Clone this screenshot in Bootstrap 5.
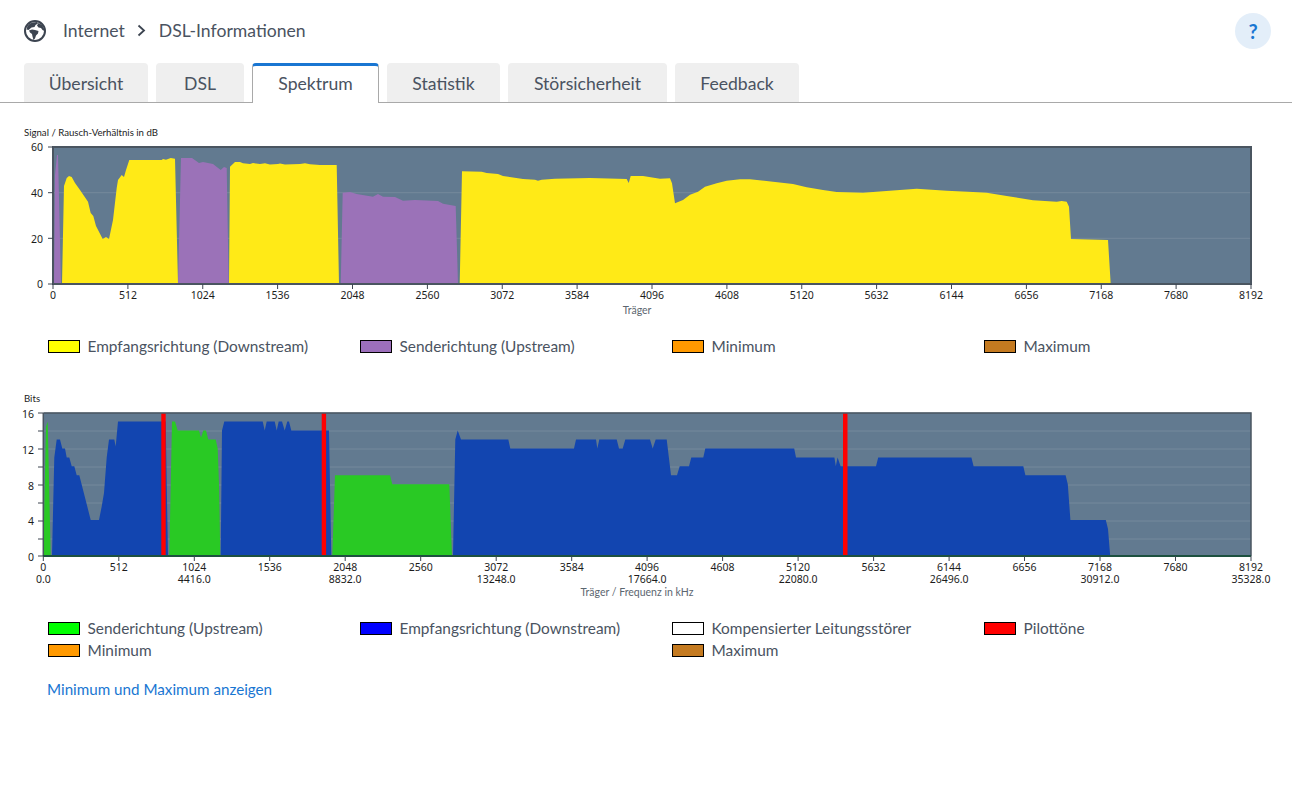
<!DOCTYPE html>
<html lang="de">
<head>
<meta charset="utf-8">
<title>DSL-Informationen</title>
<link rel="stylesheet" href="https://cdn.jsdelivr.net/npm/bootstrap@5.3.0/dist/css/bootstrap.min.css">
<style>
body{font-family:Lato,"Noto Sans",sans-serif;font-size:17.6px;color:#4a5361;background:#fff;}
.top-bar{height:63px;padding:0 21px 1px 24px;}
.crumbs{gap:12.5px;}
.crumb-globe{width:22px;height:22px;margin-right:4.5px;}
.help-btn{width:36px;height:36px;border-radius:50%;background:#e3eef9;color:#1976d2;font-weight:700;font-size:20px;border:0;padding:0;line-height:36px;}
.fb-tabs{--bs-nav-tabs-border-color:#a9a9a9;--bs-nav-tabs-border-radius:4px;gap:8px;padding-left:24px;height:40px;}
.fb-tabs .nav-link{background:#efefef;color:#4a5361;height:39px;padding:0;border:0;border-radius:4px 4px 0 0;line-height:42px;text-align:center;margin:0;}
.fb-tabs .nav-link.active{background:#fff;color:#4a5361;height:40px;border:1px solid #a9a9a9;border-top:3px solid #1976d2;border-bottom:0;line-height:36px;margin:0;}
.w-a{width:124px}.w-b{width:88px}.w-c{width:127px}.w-d{width:113px}.w-e{width:159px}.w-f{width:124px}
.plot-svg{display:block;width:1292px;}
.plot-one{height:198px;margin-top:19px;}
.plot-two{height:210px;margin-top:33px;}
.plot-svg text{font-family:"Noto Sans",sans-serif;font-size:10.5px;fill:#1c1c1c;}
.plot-svg text.ttl{font-family:Lato,sans-serif;font-size:9.65px;}
.plot-svg text.axn{font-family:Lato,sans-serif;font-size:10.5px;fill:#5c6670;}
.legend-grid{width:1248px;margin:0 0 0 48px;--bs-gutter-x:0;}
.legend-one{margin-top:15px;}
.legend-two{margin-top:17px;}
.legend-item{height:22px;line-height:22px;gap:7.5px;font-size:15.4px;}
.swatch{width:32px;height:13px;border:1px solid #000;flex:none;}
.more-link{display:block;margin:17px 0 0 47px;line-height:22px;font-size:15.2px;color:#1976d2;text-decoration:none;width:max-content;}
</style>
</head>
<body>
<header class="top-bar d-flex align-items-center justify-content-between">
  <div class="crumbs d-flex align-items-center">
    <svg class="crumb-globe" viewBox="0 0 22 22" aria-hidden="true">
      <circle cx="11" cy="11" r="10" fill="#fff" stroke="#3c4450" stroke-width="2"/>
      <path fill="#3c4450" d="M6 3.500 9 2.500 13 2l1 1.500-2.500 1.500-1 2-3 .5-3 2.500L2.500 9.500 3.500 6zM14.500 3l3.500 2 2 3.500.5 2.500-2-1-1.500-2-2.500-.5L13 5.500zM5 10.500l3-1 3 .5 3.500 1-.5 2.500-2 2-1 3-1.500 1.500-1-3.500L8 14l-2-1.500z"/>
    </svg>
    <span>Internet</span>
    <svg width="9" height="13" viewBox="0 0 9 13" aria-hidden="true"><path d="M1.500 1.500 7 6.500l-5.500 5" fill="none" stroke="#3c4450" stroke-width="1.800"/></svg>
    <span>DSL-Informationen</span>
  </div>
  <button class="help-btn" type="button">?</button>
</header>

<ul class="nav nav-tabs fb-tabs">
  <li class="nav-item"><a class="nav-link w-a" href="#">Übersicht</a></li>
  <li class="nav-item"><a class="nav-link w-b" href="#">DSL</a></li>
  <li class="nav-item"><a class="nav-link active w-c" href="#">Spektrum</a></li>
  <li class="nav-item"><a class="nav-link w-d" href="#">Statistik</a></li>
  <li class="nav-item"><a class="nav-link w-e" href="#">Störsicherheit</a></li>
  <li class="nav-item"><a class="nav-link w-f" href="#">Feedback</a></li>
</ul>

<svg class="plot-svg plot-one" viewBox="0 122 1292 198" role="img" aria-label="Signal / Rausch-Verhältnis">
  <text class="ttl" x="24" y="136">Signal / Rausch-Verhältnis in dB</text>
  <rect x="53" y="147" width="1198" height="137" fill="#627a90"/>
  <path d="M53 192.700H1251M53 238.300H1251" stroke="#75899c" stroke-width="1" fill="none"/>
  <polygon fill="#9b72b8" points="54,284 55,175 57,155 58,155 61,284"/>
  <polygon fill="#ffea17" points="62,284 64,186 66.700,178 69,176 71.700,177 75,183 80,190 88,201.700 90.700,213 93.300,216 96,226 102.700,239 106,237 109,239 113,220 116.700,188 118,180 121.700,175 124,177 126,170 129.300,160 161.700,160 163,159 166,159.700 170.700,158 175,158.700 178,284"/>
  <polygon fill="#9b72b8" points="178,284 181,158 192,158 199,163 203,162 213,164 220.700,170 224,167 226.700,168 228.700,284"/>
  <polygon fill="#ffea17" points="229,284 230,166.700 235,162 240,162 243,163.300 250,164 253,163 260,164 265,163.300 270,164.500 278,164 280,163.500 285,164.500 300,164 305,163.300 310,164.300 320,165 336.700,165 339,284"/>
  <polygon fill="#9b72b8" points="340.700,284 342.700,192.700 350,192 356.700,194 373,196.700 378,194 383,196.700 395,197 403,200.700 415,200 438,201 443,203.700 455.700,206 458,284"/>
  <polygon fill="#ffea17" points="459.700,284 462,171.300 481.700,171.700 486.700,173 498,174 503,176 523,179 535,179.700 538,180.700 541.700,179.700 555,178.700 590,178 626.700,179 628.700,183 630.700,176 643,176 660,178.700 670,178.300 672,183.300 675,203.300 683,200 690,194.700 698,191.700 705,186.700 716.700,183.300 726.700,180.700 740,179.300 750,179.300 773,181.700 793,184 806.700,187.300 823,190 836.700,192 863,192.700 883,191.300 916.700,188.700 946.700,190.700 973,192 986.700,192.700 1006.700,196 1033,200.300 1056.700,201.700 1061.700,201 1066.700,201.700 1069,206.700 1071,239 1108,240 1110.700,284"/>
  <rect x="53" y="147" width="1198" height="137" fill="none" stroke="#4a5560" stroke-width="2"/>
  <path d="M48 147H53M48 192.700H53M48 238.300H53M48 284H53M53 284v5M127.900 284v5M202.750 284v5M277.600 284v5M352.500 284v5M427.400 284v5M502.250 284v5M577.100 284v5M652 284v5M726.900 284v5M801.750 284v5M876.600 284v5M951.500 284v5M1026.400 284v5M1101.250 284v5M1176.100 284v5M1251 284v5" stroke="#3c4450" stroke-width="1" fill="none"/>
  <g text-anchor="end">
    <text x="43" y="151">60</text><text x="43" y="197">40</text><text x="43" y="243">20</text><text x="43" y="288">0</text>
  </g>
  <g text-anchor="middle">
    <text x="53" y="299">0</text><text x="127.900" y="299">512</text><text x="202.750" y="299">1024</text><text x="277.600" y="299">1536</text><text x="352.500" y="299">2048</text><text x="427.400" y="299">2560</text><text x="502.250" y="299">3072</text><text x="577.100" y="299">3584</text><text x="652" y="299">4096</text><text x="726.900" y="299">4608</text><text x="801.750" y="299">5120</text><text x="876.600" y="299">5632</text><text x="951.500" y="299">6144</text><text x="1026.400" y="299">6656</text><text x="1101.250" y="299">7168</text><text x="1176.100" y="299">7680</text><text x="1251" y="299">8192</text>
    <text class="axn" x="637" y="314">Träger</text>
  </g>
</svg>

<div class="row legend-grid legend-one">
  <div class="col-3 legend-item d-flex align-items-center"><span class="swatch" style="background:#ffff00"></span><span>Empfangsrichtung (Downstream)</span></div>
  <div class="col-3 legend-item d-flex align-items-center"><span class="swatch" style="background:#9c6fbb"></span><span>Senderichtung (Upstream)</span></div>
  <div class="col-3 legend-item d-flex align-items-center"><span class="swatch" style="background:#ff9900"></span><span>Minimum</span></div>
  <div class="col-3 legend-item d-flex align-items-center"><span class="swatch" style="background:#c47a20"></span><span>Maximum</span></div>
</div>

<svg class="plot-svg plot-two" viewBox="0 390 1292 210" role="img" aria-label="Bits">
  <text class="ttl" x="24" y="402">Bits</text>
  <rect x="43.300" y="412.700" width="1207.700" height="143" fill="#627a90"/>
  <path d="M43 431H1251M43 449H1251M43 467H1251M43 485H1251M43 503H1251M43 521H1251M43 539H1251" stroke="#75899c" stroke-width="1" fill="none"/>
  <polygon fill="#29c924" points="43.300,556 46,426.700 47.700,421.600 50.700,556"/>
  <polygon fill="#1245b0" points="52,556 54.300,457.400 56.700,439.500 60,439.500 62.300,448.400 65,448.400 66.700,457.400 69.300,457.400 71.700,466.300 74.300,466.300 76.700,475.200 79.300,475.200 90.700,519.900 99,519.900 101.700,506.500 104,493.100 106.700,457.400 109,439.500 114.300,439.500 115.700,446.600 118,421.600 165.700,421.600 167,500 168,556"/>
  <polygon fill="#29c924" points="169.300,556 172,421.600 175,421.600 177.700,430.500 199,430.500 201,437.700 203.300,430.500 206,430.500 208.300,439.500 215.700,439.500 217.700,448.400 219,484.200 220.300,556"/>
  <polygon fill="#1245b0" points="220.700,556 222,430.500 224.300,421.600 262.700,421.600 264.700,430.500 266.700,421.600 274.700,421.600 276.700,430.500 278.700,421.600 282,421.600 284.700,430.500 287.300,421.600 289,421.600 291.300,430.500 329,430.500 331.300,556"/>
  <polygon fill="#29c924" points="332.300,556 335,475.200 390,475.200 392.300,484.200 449.300,484.200 452,556"/>
  <polygon fill="#1245b0" points="453,556 455.300,439.500 457.700,430.500 461,439.500 508.300,439.500 510.300,448.400 574,448.400 576,439.500 596,439.500 597.300,448.400 599.300,439.500 616.700,439.500 619,448.400 622.700,448.400 625.300,439.500 650,439.500 652.700,448.400 655.700,439.500 666.700,439.500 671,475.200 677,475.200 679.700,466.300 689,466.300 691.300,457.400 703.300,457.400 705.300,448.400 794.200,448.400 796,457.400 834.400,457.400 835.800,466.300 837.600,457.400 840.600,466.300 876,466.300 878.200,457.400 971.400,457.400 973.600,466.300 1023.300,466.300 1025.400,475.200 1065.600,475.200 1067.800,484.200 1070.400,519.900 1105.800,519.900 1108,528.900 1110.200,556"/>
  <rect x="161.300" y="413" width="4.400" height="143" fill="#ff0000"/>
  <rect x="321.700" y="413" width="4.400" height="143" fill="#ff0000"/>
  <rect x="843" y="413" width="4.500" height="143" fill="#ff0000"/>
  <path d="M43.300 413H1251V556M43.300 556V413" fill="none" stroke="#4a5560" stroke-width="1.500"/>
  <path d="M43 556H1251" stroke="#1d5140" stroke-width="2" fill="none"/>
  <path d="M38 413H43M38 431H43M38 449H43M38 467H43M38 485H43M38 503H43M38 521H43M38 539H43M38 556H43M43.300 556v5M118.800 556v5M194.300 556v5M269.700 556v5M345.200 556v5M420.700 556v5M496.200 556v5M571.700 556v5M647.100 556v5M722.600 556v5M798.100 556v5M873.600 556v5M949.100 556v5M1024.500 556v5M1100 556v5M1175.500 556v5M1251 556v5" stroke="#3c4450" stroke-width="1" fill="none"/>
  <g text-anchor="end">
    <text x="34" y="418">16</text><text x="34" y="454">12</text><text x="34" y="490">8</text><text x="34" y="525">4</text><text x="34" y="561">0</text>
  </g>
  <g text-anchor="middle">
    <text x="43.300" y="571">0</text><text x="118.800" y="571">512</text><text x="194.300" y="571">1024</text><text x="269.700" y="571">1536</text><text x="345.200" y="571">2048</text><text x="420.700" y="571">2560</text><text x="496.200" y="571">3072</text><text x="571.700" y="571">3584</text><text x="647.100" y="571">4096</text><text x="722.600" y="571">4608</text><text x="798.100" y="571">5120</text><text x="873.600" y="571">5632</text><text x="949.100" y="571">6144</text><text x="1024.500" y="571">6656</text><text x="1100" y="571">7168</text><text x="1175.500" y="571">7680</text><text x="1251" y="571">8192</text>
    <text x="43.300" y="583">0.0</text><text x="194.300" y="583">4416.0</text><text x="345.200" y="583">8832.0</text><text x="496.200" y="583">13248.0</text><text x="647.100" y="583">17664.0</text><text x="798.100" y="583">22080.0</text><text x="949.100" y="583">26496.0</text><text x="1100" y="583">30912.0</text><text x="1251" y="583">35328.0</text>
    <text class="axn" x="637" y="596">Träger / Frequenz in kHz</text>
  </g>
</svg>

<div class="row legend-grid legend-two">
  <div class="col-3 legend-item d-flex align-items-center"><span class="swatch" style="background:#00ff00"></span><span>Senderichtung (Upstream)</span></div>
  <div class="col-3 legend-item d-flex align-items-center"><span class="swatch" style="background:#0000ff"></span><span>Empfangsrichtung (Downstream)</span></div>
  <div class="col-3 legend-item d-flex align-items-center"><span class="swatch" style="background:#ffffff"></span><span>Kompensierter Leitungsstörer</span></div>
  <div class="col-3 legend-item d-flex align-items-center"><span class="swatch" style="background:#ff0000"></span><span>Pilottöne</span></div>
  <div class="col-3 legend-item d-flex align-items-center"><span class="swatch" style="background:#ff9900"></span><span>Minimum</span></div>
  <div class="col-3 legend-item"></div>
  <div class="col-3 legend-item d-flex align-items-center"><span class="swatch" style="background:#c47a20"></span><span>Maximum</span></div>
</div>

<a class="more-link" href="#">Minimum und Maximum anzeigen</a>

<script src="https://cdn.jsdelivr.net/npm/bootstrap@5.3.0/dist/js/bootstrap.bundle.min.js"></script>
</body>
</html>
